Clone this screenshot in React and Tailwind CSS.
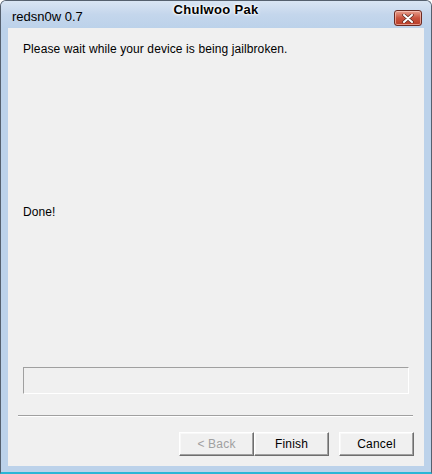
export default function App() {
  const font = { fontFamily: '"Segoe UI", "Liberation Sans", Arial, sans-serif' };
  const btn =
    "w-[75px] h-[24px] bg-[#f0f0f0] border border-t-white border-l-white border-r-[#6e6e6e] border-b-[#6e6e6e] shadow-[inset_-1px_-1px_0_#a0a0a0,inset_1px_1px_0_#f8f8f8] text-[12px] tracking-[0.2px] leading-none flex items-center justify-center";
  return (
    <div
      className="w-[432px] h-[474px] flex flex-col bg-[#bcd2ea] border-l border-r border-t border-[#55606e] border-b-2 border-b-[#2ab6d6] rounded-tl-[6px] rounded-tr-[6px] overflow-hidden"
      style={font}
    >
      {/* title bar */}
      <div className="h-[27px] relative bg-gradient-to-b from-[#d9e5f3] via-[#c4d6ec] to-[#bcd2ea]">
        <div className="absolute left-[11px] top-[8px] text-[13px] leading-[16px] text-black">redsn0w 0.7</div>
        <div className="absolute left-0 right-0 top-[1px] text-center text-[13px] tracking-[0.3px] leading-[16px] font-bold text-black [text-shadow:0_0_4px_#fff,0_0_3px_#fff,0_0_2px_#fff]">
          Chulwoo Pak
        </div>
        <div className="absolute left-[393px] top-[9px] w-[28px] h-[16px] rounded-[3px] border border-[#6b2a22] bg-gradient-to-b from-[#e8a08f] via-[#c9533e] to-[#b83c26] flex items-center justify-center shadow-[inset_0_0_0_1px_rgba(255,210,200,0.6)]">
          <svg width="12" height="9" viewBox="0 0 12 9">
            <path d="M2 1 L10 8 M10 1 L2 8" stroke="#5a2a22" strokeWidth="3.4" strokeLinecap="round" />
            <path d="M2 1 L10 8 M10 1 L2 8" stroke="#ffffff" strokeWidth="2" strokeLinecap="round" />
          </svg>
        </div>
      </div>
      {/* body */}
      <div className="flex flex-1 px-[7px] pb-[6px]">
        <div className="flex-1 bg-[#f0f0f0] flex flex-col text-[12px] tracking-[0.1px] text-black">
          <div className="mt-[14px] ml-[15px] leading-[15px]">Please wait while your device is being jailbroken.</div>
          <div className="mt-[148px] ml-[15px] leading-[15px]">Done!</div>
          <div className="mt-[147px] ml-[15px] w-[386px] h-[27px] border border-t-[#a0a0a0] border-l-[#a0a0a0] border-r-white border-b-white"></div>
          <div className="mt-[21px] ml-[10px] w-[395px] h-[2px] border-t border-t-[#a0a0a0] border-b border-b-white"></div>
          <div className="mt-[15px] ml-[171px] flex">
            <div className={btn + " text-[#a0a0a0]"}>&lt; Back</div>
            <div className={btn}>Finish</div>
            <div className={btn + " ml-[10px]"}>Cancel</div>
          </div>
        </div>
      </div>
    </div>
  );
}
